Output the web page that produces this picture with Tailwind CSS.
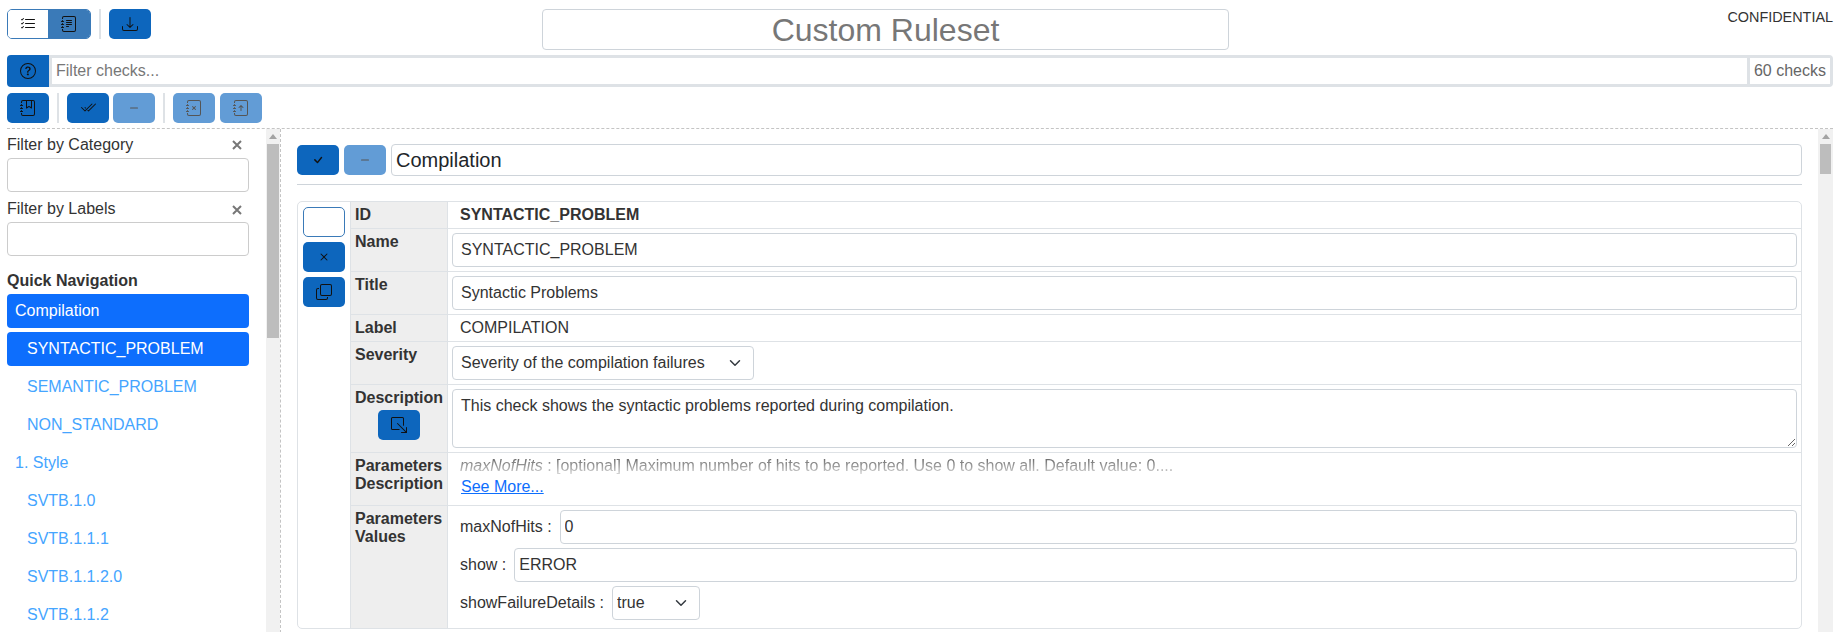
<!DOCTYPE html>
<html lang="en">
<head>
<meta charset="utf-8">
<title>Custom Ruleset</title>
<script src="https://cdn.jsdelivr.net/npm/@tailwindcss/browser@4"></script>
</head>
<body class="h-[632px] w-[1839px] overflow-hidden bg-white font-['Liberation_Sans',Arial,sans-serif] text-[16px] text-[#212529]">

<!-- header row -->
<div class="flex h-[55px] items-start pl-[7px] pr-[6px]">
  <div class="flex w-[535px] shrink-0 pt-[9px]">
    <div class="flex h-[30px] w-[84px] overflow-hidden rounded-[5px] border border-[#3a7ab8]">
      <div class="flex w-[40px] items-center justify-center bg-white">
        <svg class="h-4 w-4" viewBox="0 0 16 16" fill="#111"><path fill-rule="evenodd" d="M5 11.5a.5.5 0 0 1 .5-.5h9a.5.5 0 0 1 0 1h-9a.5.5 0 0 1-.5-.5m0-4a.5.5 0 0 1 .5-.5h9a.5.5 0 0 1 0 1h-9a.5.5 0 0 1-.5-.5m0-4a.5.5 0 0 1 .5-.5h9a.5.5 0 0 1 0 1h-9a.5.5 0 0 1-.5-.5M3.854 2.146a.5.5 0 0 1 0 .708l-1.5 1.5a.5.5 0 0 1-.708 0l-.5-.5a.5.5 0 1 1 .708-.708L2 3.293l1.146-1.147a.5.5 0 0 1 .708 0m0 4a.5.5 0 0 1 0 .708l-1.5 1.5a.5.5 0 0 1-.708 0l-.5-.5a.5.5 0 1 1 .708-.708L2 7.293l1.146-1.147a.5.5 0 0 1 .708 0m0 4a.5.5 0 0 1 0 .708l-1.5 1.5a.5.5 0 0 1-.708 0l-.5-.5a.5.5 0 0 1 .708-.708l.146.147 1.146-1.147a.5.5 0 0 1 .708 0"/></svg>
      </div>
      <div class="flex flex-1 items-center justify-center bg-[#3a7ab8]">
        <svg class="h-4 w-4" viewBox="0 0 16 16" fill="#111"><path d="M5 10.5a.5.5 0 0 1 .5-.5h2a.5.5 0 0 1 0 1h-2a.5.5 0 0 1-.5-.5m0-2a.5.5 0 0 1 .5-.5h5a.5.5 0 0 1 0 1h-5a.5.5 0 0 1-.5-.5m0-2a.5.5 0 0 1 .5-.5h5a.5.5 0 0 1 0 1h-5a.5.5 0 0 1-.5-.5m0-2a.5.5 0 0 1 .5-.5h5a.5.5 0 0 1 0 1h-5a.5.5 0 0 1-.5-.5"/><path d="M3 0h10a2 2 0 0 1 2 2v12a2 2 0 0 1-2 2H3a2 2 0 0 1-2-2v-1h1v1a1 1 0 0 0 1 1h10a1 1 0 0 0 1-1V2a1 1 0 0 0-1-1H3a1 1 0 0 0-1 1v1H1V2a2 2 0 0 1 2-2"/><path d="M1 5v-.5a.5.5 0 0 1 1 0V5h.5a.5.5 0 0 1 0 1h-2a.5.5 0 0 1 0-1zm0 3v-.5a.5.5 0 0 1 1 0V8h.5a.5.5 0 0 1 0 1h-2a.5.5 0 0 1 0-1zm0 3v-.5a.5.5 0 0 1 1 0v.5h.5a.5.5 0 0 1 0 1h-2a.5.5 0 0 1 0-1z"/></svg>
      </div>
    </div>
    <div class="mx-[8px] h-[30px] w-[2px] bg-[#dee2e6]"></div>
    <div class="flex h-[30px] w-[42px] items-center justify-center rounded-[5px] bg-[#0d66bd]">
      <svg class="h-4 w-4" viewBox="0 0 16 16" fill="#111"><path d="M.5 9.9a.5.5 0 0 1 .5.5v2.5a1 1 0 0 0 1 1h12a1 1 0 0 0 1-1v-2.5a.5.5 0 0 1 1 0v2.5a2 2 0 0 1-2 2H2a2 2 0 0 1-2-2v-2.5a.5.5 0 0 1 .5-.5"/><path d="M7.646 11.854a.5.5 0 0 0 .708 0l3-3a.5.5 0 0 0-.708-.708L8.5 10.293V1.5a.5.5 0 0 0-1 0v8.793L5.354 8.146a.5.5 0 1 0-.708.708z"/></svg>
    </div>
  </div>
  <input value="Custom Ruleset" class="mt-[9px] h-[41px] w-[687px] shrink-0 rounded-[4px] border border-[#ced4da] text-center text-[32px] text-[#777] outline-none">
  <div class="flex-1 pt-[9px] text-right text-[14.4px] leading-[17px] text-[#333]">CONFIDENTIAL</div>
</div>

<!-- filter row -->
<div class="ml-[7px] mr-[6px] flex h-[32px] overflow-hidden rounded-[4px]">
  <div class="flex w-[42px] shrink-0 items-center justify-center bg-[#0d66bd]">
    <svg class="h-4 w-4" viewBox="0 0 16 16" fill="#111"><path d="M8 15A7 7 0 1 1 8 1a7 7 0 0 1 0 14m0 1A8 8 0 1 0 8 0a8 8 0 0 0 0 16"/><path d="M5.255 5.786a.237.237 0 0 0 .241.247h.825c.138 0 .248-.113.266-.25.09-.656.54-1.134 1.342-1.134.686 0 1.314.343 1.314 1.168 0 .635-.374.927-.965 1.371-.673.489-1.206 1.06-1.168 1.987l.003.217a.25.25 0 0 0 .25.246h.811a.25.25 0 0 0 .25-.25v-.105c0-.718.273-.927 1.01-1.486.609-.463 1.244-.977 1.244-2.056 0-1.511-1.276-2.241-2.673-2.241-1.267 0-2.655.59-2.75 2.286m1.557 5.763c0 .533.425.927 1.01.927.609 0 1.028-.394 1.028-.927 0-.552-.42-.94-1.029-.94-.584 0-1.009.388-1.009.94"/></svg>
  </div>
  <div class="flex min-w-0 flex-1 border-[3px] border-[#dee2e6]">
    <input placeholder="Filter checks..." class="min-w-0 flex-1 px-[4px] text-[16px] outline-none placeholder:text-[#777]">
    <div class="flex w-[83px] items-center justify-center border-l-[3px] border-[#dee2e6] text-[#666]">60 checks</div>
  </div>
</div>

<!-- action row -->
<div class="flex h-[36px] items-end pl-[7px]">
  <div class="flex h-[30px] w-[42px] items-center justify-center rounded-[5px] bg-[#0d66bd]">
    <svg class="h-4 w-4" viewBox="0 0 16 16" fill="#111"><path fill-rule="evenodd" d="M6 8V1h1v6.117L8.743 6.07a.5.5 0 0 1 .514 0L11 7.117V1h1v7a.5.5 0 0 1-.757.429L9 7.083 6.757 8.43A.5.5 0 0 1 6 8"/><path d="M3 0h10a2 2 0 0 1 2 2v12a2 2 0 0 1-2 2H3a2 2 0 0 1-2-2v-1h1v1a1 1 0 0 0 1 1h10a1 1 0 0 0 1-1V2a1 1 0 0 0-1-1H3a1 1 0 0 0-1 1v1H1V2a2 2 0 0 1 2-2"/><path d="M1 5v-.5a.5.5 0 0 1 1 0V5h.5a.5.5 0 0 1 0 1h-2a.5.5 0 0 1 0-1zm0 3v-.5a.5.5 0 0 1 1 0V8h.5a.5.5 0 0 1 0 1h-2a.5.5 0 0 1 0-1zm0 3v-.5a.5.5 0 0 1 1 0v.5h.5a.5.5 0 0 1 0 1h-2a.5.5 0 0 1 0-1z"/></svg>
  </div>
  <div class="mx-[8px] h-[30px] w-[2px] bg-[#dee2e6]"></div>
  <div class="flex h-[30px] w-[42px] items-center justify-center rounded-[5px] bg-[#0d66bd]">
    <svg class="h-4 w-4" viewBox="0 0 16 16" fill="#111"><path d="M12.354 4.354a.5.5 0 0 0-.708-.708L5 10.293 1.854 7.146a.5.5 0 1 0-.708.708l3.5 3.5a.5.5 0 0 0 .708 0zm-4.208 7-.896-.897.707-.707.543.543 6.646-6.647a.5.5 0 0 1 .708.708l-7 7a.5.5 0 0 1-.708 0"/><path d="m5.354 7.146.896.897-.707.707-.897-.896a.5.5 0 1 1 .708-.708"/></svg>
  </div>
  <div class="ml-[4px] flex h-[30px] w-[42px] items-center justify-center rounded-[5px] bg-[#629cd6]">
    <svg class="h-4 w-4" viewBox="0 0 16 16" fill="#555"><path d="M4 8a.5.5 0 0 1 .5-.5h7a.5.5 0 0 1 0 1h-7A.5.5 0 0 1 4 8"/></svg>
  </div>
  <div class="mx-[8px] h-[30px] w-[2px] bg-[#dee2e6]"></div>
  <div class="flex h-[30px] w-[42px] items-center justify-center rounded-[5px] bg-[#629cd6]">
    <svg class="h-4 w-4" viewBox="0 0 16 16" fill="#555"><path fill-rule="evenodd" d="M6.146 6.146a.5.5 0 0 1 .708 0L8 7.293l1.146-1.147a.5.5 0 1 1 .708.708L8.707 8l1.147 1.146a.5.5 0 0 1-.708.708L8 8.707 6.854 9.854a.5.5 0 0 1-.708-.708L7.293 8 6.146 6.854a.5.5 0 0 1 0-.708"/><path d="M3 0h10a2 2 0 0 1 2 2v12a2 2 0 0 1-2 2H3a2 2 0 0 1-2-2v-1h1v1a1 1 0 0 0 1 1h10a1 1 0 0 0 1-1V2a1 1 0 0 0-1-1H3a1 1 0 0 0-1 1v1H1V2a2 2 0 0 1 2-2"/><path d="M1 5v-.5a.5.5 0 0 1 1 0V5h.5a.5.5 0 0 1 0 1h-2a.5.5 0 0 1 0-1zm0 3v-.5a.5.5 0 0 1 1 0V8h.5a.5.5 0 0 1 0 1h-2a.5.5 0 0 1 0-1zm0 3v-.5a.5.5 0 0 1 1 0v.5h.5a.5.5 0 0 1 0 1h-2a.5.5 0 0 1 0-1z"/></svg>
  </div>
  <div class="ml-[5px] flex h-[30px] w-[42px] items-center justify-center rounded-[5px] bg-[#629cd6]">
    <svg class="h-4 w-4" viewBox="0 0 16 16" fill="#555"><path fill-rule="evenodd" d="M8 11a.5.5 0 0 0 .5-.5V6.707l1.146 1.147a.5.5 0 0 0 .708-.708l-2-2a.5.5 0 0 0-.708 0l-2 2a.5.5 0 1 0 .708.708L7.5 6.707V10.5a.5.5 0 0 0 .5.5"/><path d="M3 0h10a2 2 0 0 1 2 2v12a2 2 0 0 1-2 2H3a2 2 0 0 1-2-2v-1h1v1a1 1 0 0 0 1 1h10a1 1 0 0 0 1-1V2a1 1 0 0 0-1-1H3a1 1 0 0 0-1 1v1H1V2a2 2 0 0 1 2-2"/><path d="M1 5v-.5a.5.5 0 0 1 1 0V5h.5a.5.5 0 0 1 0 1h-2a.5.5 0 0 1 0-1zm0 3v-.5a.5.5 0 0 1 1 0V8h.5a.5.5 0 0 1 0 1h-2a.5.5 0 0 1 0-1zm0 3v-.5a.5.5 0 0 1 1 0v.5h.5a.5.5 0 0 1 0 1h-2a.5.5 0 0 1 0-1z"/></svg>
  </div>
</div>

<!-- split panels -->
<div class="ml-[7px] mr-[6px] mt-[5px] flex h-[505px] overflow-hidden border-t border-dashed border-[#c4c4c4]">
  <!-- left panel -->
  <div class="flex w-[274px] shrink-0 border-r border-dashed border-[#c4c4c4]">
    <div class="w-[242px] shrink-0 overflow-hidden">
      <div class="flex h-[29px] items-end justify-between leading-[18px] text-[#333]">
        <span class="pb-[4px]">Filter by Category</span>
        <svg class="mb-[8px] mr-[7px] h-[10px] w-[10px]" viewBox="0 0 10 10" stroke="#777" stroke-width="2" fill="none"><path d="M1 1l8 8M9 1l-8 8"/></svg>
      </div>
      <div class="h-[34px] rounded-[4px] border border-[#ccc]"></div>
      <div class="flex h-[30px] items-end justify-between leading-[18px] text-[#333]">
        <span class="pb-[4px]">Filter by Labels</span>
        <svg class="mb-[7px] mr-[7px] h-[10px] w-[10px]" viewBox="0 0 10 10" stroke="#777" stroke-width="2" fill="none"><path d="M1 1l8 8M9 1l-8 8"/></svg>
      </div>
      <div class="h-[34px] rounded-[4px] border border-[#ccc]"></div>
      <div class="flex h-[38px] items-end pb-[4px] font-bold leading-[18px] text-[#333]">Quick Navigation</div>
      <div class="flex flex-col gap-[4px]">
        <div class="flex h-[34px] items-center rounded-[4px] bg-[#0d6efd] pl-[8px] text-white">Compilation</div>
        <div class="flex h-[34px] items-center rounded-[4px] bg-[#0d6efd] pl-[20px] text-white">SYNTACTIC_PROBLEM</div>
        <div class="flex h-[34px] items-center pl-[20px] text-[#45a5ff]">SEMANTIC_PROBLEM</div>
        <div class="flex h-[34px] items-center pl-[20px] text-[#45a5ff]">NON_STANDARD</div>
        <div class="flex h-[34px] items-center pl-[8px] text-[#45a5ff]">1. Style</div>
        <div class="flex h-[34px] items-center pl-[20px] text-[#45a5ff]">SVTB.1.0</div>
        <div class="flex h-[34px] items-center pl-[20px] text-[#45a5ff]">SVTB.1.1.1</div>
        <div class="flex h-[34px] items-center pl-[20px] text-[#45a5ff]">SVTB.1.1.2.0</div>
        <div class="flex h-[34px] items-center pl-[20px] text-[#45a5ff]">SVTB.1.1.2</div>
      </div>
    </div>
    <!-- scrollbar -->
    <div class="ml-[17px] flex w-[14px] shrink-0 flex-col items-center bg-[#f1f1f1]">
      <div class="mt-[5px] h-0 w-0 border-x-[4px] border-b-[5px] border-x-transparent border-b-[#a3a3a3]"></div>
      <div class="mt-[5px] h-[194px] w-[12px] bg-[#bdbdbd]"></div>
    </div>
  </div>

  <!-- right panel -->
  <div class="flex min-w-0 flex-1">
    <div class="min-w-0 flex-1 overflow-hidden pl-[16px] pr-[16px]">
      <div class="flex h-[55px] items-start gap-[5px] pt-[15px]">
        <div class="mt-[1px] flex h-[30px] w-[42px] shrink-0 items-center justify-center rounded-[5px] bg-[#0d66bd]">
          <svg class="h-4 w-4" viewBox="0 0 16 16" fill="#111"><path d="M10.97 4.97a.75.75 0 0 1 1.07 1.05l-3.99 4.99a.75.75 0 0 1-1.08.02L4.324 8.384a.75.75 0 1 1 1.06-1.06l2.094 2.093 3.473-4.425z"/></svg>
        </div>
        <div class="mt-[1px] flex h-[30px] w-[42px] shrink-0 items-center justify-center rounded-[5px] bg-[#629cd6]">
          <svg class="h-4 w-4" viewBox="0 0 16 16" fill="#555"><path d="M4 8a.5.5 0 0 1 .5-.5h7a.5.5 0 0 1 0 1h-7A.5.5 0 0 1 4 8"/></svg>
        </div>
        <input value="Compilation" class="h-[32px] min-w-0 flex-1 rounded-[4px] border border-[#ced4da] px-[4px] text-[20px] outline-none">
      </div>
      <div class="h-px bg-[#ced4da]"></div>

      <!-- card -->
      <div class="mt-[16px] flex h-[428px] rounded-[5px] border border-[#dee2e6]">
        <div class="flex w-[52px] shrink-0 flex-col items-center gap-[5px] pt-[5px]">
          <div class="h-[30px] w-[42px] rounded-[5px] border border-[#3a7ab8] bg-white"></div>
          <div class="flex h-[30px] w-[42px] items-center justify-center rounded-[5px] bg-[#0d66bd]">
            <svg class="h-4 w-4" viewBox="0 0 16 16" fill="#111"><path d="M4.646 4.646a.5.5 0 0 1 .708 0L8 7.293l2.646-2.647a.5.5 0 0 1 .708.708L8.707 8l2.647 2.646a.5.5 0 0 1-.708.708L8 8.707l-2.646 2.647a.5.5 0 0 1-.708-.708L7.293 8 4.646 5.354a.5.5 0 0 1 0-.708"/></svg>
          </div>
          <div class="flex h-[30px] w-[42px] items-center justify-center rounded-[5px] bg-[#0d66bd]">
            <svg class="h-4 w-4" viewBox="0 0 16 16" fill="#111"><path fill-rule="evenodd" d="M4 2a2 2 0 0 1 2-2h8a2 2 0 0 1 2 2v8a2 2 0 0 1-2 2H6a2 2 0 0 1-2-2zm2-1a1 1 0 0 0-1 1v8a1 1 0 0 0 1 1h8a1 1 0 0 0 1-1V2a1 1 0 0 0-1-1zM2 5a1 1 0 0 0-1 1v8a1 1 0 0 0 1 1h8a1 1 0 0 0 1-1v-1h1v1a2 2 0 0 1-2 2H2a2 2 0 0 1-2-2V6a2 2 0 0 1 2-2h1v1z"/></svg>
          </div>
        </div>
        <div class="grid min-w-0 flex-1 grid-cols-[97px_1fr] grid-rows-[27px_43px_43px_27px_43px_68px_53px_1fr] border-l border-[#dee2e6] leading-[18px]">
          <div class="border-b border-r border-[#dee2e6] bg-[#eee] pl-[4px] pt-[4px] font-bold text-[#333]">ID</div>
          <div class="border-b border-[#dee2e6] pl-[12px] pt-[4px] font-bold text-[#333]">SYNTACTIC_PROBLEM</div>

          <div class="border-b border-r border-[#dee2e6] bg-[#eee] pl-[4px] pt-[4px] font-bold text-[#333]">Name</div>
          <div class="border-b border-[#dee2e6] px-[4px] py-[4px]">
            <input value="SYNTACTIC_PROBLEM" class="h-[34px] w-full rounded-[4px] border border-[#ced4da] px-[8px] text-[#333] outline-none">
          </div>

          <div class="border-b border-r border-[#dee2e6] bg-[#eee] pl-[4px] pt-[4px] font-bold text-[#333]">Title</div>
          <div class="border-b border-[#dee2e6] px-[4px] py-[4px]">
            <input value="Syntactic Problems" class="h-[34px] w-full rounded-[4px] border border-[#ced4da] px-[8px] text-[#333] outline-none">
          </div>

          <div class="border-b border-r border-[#dee2e6] bg-[#eee] pl-[4px] pt-[4px] font-bold text-[#333]">Label</div>
          <div class="border-b border-[#dee2e6] pl-[12px] pt-[4px] text-[#333]">COMPILATION</div>

          <div class="border-b border-r border-[#dee2e6] bg-[#eee] pl-[4px] pt-[4px] font-bold text-[#333]">Severity</div>
          <div class="border-b border-[#dee2e6] px-[4px] py-[4px]">
            <div class="relative h-[34px] w-[302px]">
              <select class="h-full w-full appearance-none rounded-[4px] border border-[#ced4da] bg-white px-[8px] text-[#333] outline-none">
                <option>Severity of the compilation failures</option>
              </select>
              <svg class="pointer-events-none absolute right-[13px] top-[11px] h-3 w-3" viewBox="0 0 16 16" fill="none" stroke="#343a40" stroke-width="2" stroke-linecap="round" stroke-linejoin="round"><path d="m2 5 6 6 6-6"/></svg>
            </div>
          </div>

          <div class="flex flex-col items-center border-b border-r border-[#dee2e6] bg-[#eee] pt-[4px] font-bold text-[#333]">
            <span class="self-start pl-[4px]">Description</span>
            <div class="mt-[3px] flex h-[30px] w-[42px] items-center justify-center rounded-[5px] bg-[#0d66bd]">
              <svg class="h-4 w-4" viewBox="0 0 16 16" fill="#111"><path fill-rule="evenodd" d="M8.636 12.5a.5.5 0 0 1-.5.5H1.5A1.5 1.5 0 0 1 0 11.5v-10A1.5 1.5 0 0 1 1.5 0h10A1.5 1.5 0 0 1 13 1.5v6.636a.5.5 0 0 1-1 0V1.5a.5.5 0 0 0-.5-.5h-10a.5.5 0 0 0-.5.5v10a.5.5 0 0 0 .5.5h6.636a.5.5 0 0 1 .5.5"/><path fill-rule="evenodd" d="M16 15.5a.5.5 0 0 1-.5.5h-5a.5.5 0 0 1 0-1h3.793L6.146 6.854a.5.5 0 1 1 .708-.708L15 14.293V10.5a.5.5 0 0 1 1 0z"/></svg>
            </div>
          </div>
          <div class="border-b border-[#dee2e6] px-[4px] py-[4px]">
            <textarea class="block h-[59px] w-full rounded-[4px] border border-[#ced4da] px-[8px] py-[7px] leading-[18px] text-[#333] outline-none">This check shows the syntactic problems reported during compilation.</textarea>
          </div>

          <div class="border-b border-r border-[#dee2e6] bg-[#eee] pl-[4px] pt-[4px] font-bold text-[#333]">Parameters Description</div>
          <div class="border-b border-[#dee2e6] pl-[13px] pt-[4px]">
            <div class="-ml-px h-[18px] overflow-hidden whitespace-nowrap text-[#444] [mask-image:linear-gradient(to_bottom,rgba(0,0,0,0.85),rgba(0,0,0,0.2))]"><em>maxNofHits</em> : [optional] Maximum number of hits to be reported. Use 0 to show all. Default value: 0....</div>
            <a href="#" class="mt-[3px] block text-[#0d6efd] underline">See More...</a>
          </div>

          <div class="border-r border-[#dee2e6] bg-[#eee] pl-[4px] pt-[4px] font-bold text-[#333]">Parameters Values</div>
          <div class="flex min-w-0 flex-col gap-[4px] px-[4px] pt-[4px]">
            <div class="flex items-center gap-[8px] pl-[8px] text-[#333]">
              <span class="whitespace-nowrap">maxNofHits :</span>
              <input value="0" class="h-[34px] min-w-0 flex-1 rounded-[4px] border border-[#ced4da] px-[4px] text-[#333] outline-none">
            </div>
            <div class="flex items-center gap-[8px] pl-[8px] text-[#333]">
              <span class="whitespace-nowrap">show :</span>
              <input value="ERROR" class="h-[34px] min-w-0 flex-1 rounded-[4px] border border-[#ced4da] px-[4px] text-[#333] outline-none">
            </div>
            <div class="flex items-center gap-[8px] pl-[8px] text-[#333]">
              <span class="whitespace-nowrap">showFailureDetails :</span>
              <div class="relative h-[34px] w-[88px]">
                <select class="h-full w-full appearance-none rounded-[4px] border border-[#ced4da] bg-white px-[4px] text-[#333] outline-none">
                  <option>true</option>
                </select>
                <svg class="pointer-events-none absolute right-[13px] top-[11px] h-3 w-3" viewBox="0 0 16 16" fill="none" stroke="#343a40" stroke-width="2" stroke-linecap="round" stroke-linejoin="round"><path d="m2 5 6 6 6-6"/></svg>
              </div>
            </div>
          </div>
        </div>
      </div>
    </div>
    <!-- scrollbar -->
    <div class="flex w-[15px] shrink-0 flex-col items-center bg-[#f1f1f1]">
      <div class="mt-[5px] h-0 w-0 border-x-[4px] border-b-[5px] border-x-transparent border-b-[#a3a3a3]"></div>
      <div class="mt-[5px] h-[30px] w-[11px] bg-[#bdbdbd]"></div>
    </div>
  </div>
</div>
</body>
</html>
